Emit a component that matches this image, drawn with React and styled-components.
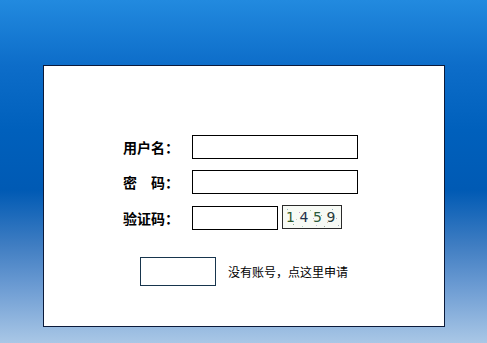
import React from "react";
import styled, { createGlobalStyle } from "styled-components";

const Global = createGlobalStyle`
  html, body { margin: 0; padding: 0; }
  body {
    width: 487px;
    height: 343px;
    overflow: hidden;
    font-family: "Noto Sans CJK SC", "Liberation Sans", sans-serif;
    background: linear-gradient(to bottom,
      #228ADF 0px,
      #0D6DC9 65px,
      #0060BC 130px,
      #005AB4 190px,
      #3F7DC2 245px,
      #6A9AD2 285px,
      #A9C7E6 343px);
  }
`;

const Page = styled.div`
  padding: 65px 0 0 43px;
`;

const Panel = styled.div`
  box-sizing: border-box;
  width: 402px;
  height: 262px;
  background: #ffffff;
  border: 1px solid #0b1a3a;
  padding: 69px 0 0 79px;
  display: flex;
  flex-direction: column;
`;

const Form = styled.div`
  display: flex;
  flex-direction: column;
  gap: 11px;
`;

const Row = styled.div`
  display: flex;
  align-items: center;
  height: 24px;
  margin-top: ${(p) => p.$shift || 0}px;
`;

const Label = styled.span`
  width: 69px;
  font-size: 14px;
  font-weight: 700;
  color: #000;
  line-height: 24px;
  white-space: pre;
`;

const Field = styled.div`
  box-sizing: border-box;
  width: ${(p) => p.$w}px;
  height: 24px;
  border: 1px solid #000;
  background: #fff;
`;

const Captcha = styled.div`
  position: relative;
  box-sizing: border-box;
  width: 60px;
  height: 24px;
  margin-left: 4px;
  margin-top: -2px;
  border: 1px solid #2a2a2a;
  background: #f7faf5;
  display: flex;
  align-items: center;
  padding-left: 3px;
`;

const Digit = styled.span`
  width: 13.5px;
  font-family: "DejaVu Sans", "Liberation Sans", sans-serif;
  font-size: 14px;
  line-height: 20px;
  color: ${(p) => p.$c};
  position: relative;
  z-index: 1;
`;

const Noise = styled.svg`
  position: absolute;
  left: 0;
  top: 0;
`;

const Footer = styled.div`
  display: flex;
  align-items: center;
  margin-top: 27px;
  padding-left: 17px;
`;

const Box = styled.div`
  box-sizing: border-box;
  width: 76px;
  height: 29px;
  border: 1px solid #17354d;
  background: #fff;
`;

const Link = styled.span`
  margin-left: 12px;
  font-size: 12px;
  color: #000;
`;

const dots = [
  [4, 3, "#9bb"], [10, 18, "#8a8"], [16, 6, "#c9c"], [22, 15, "#99c"],
  [27, 4, "#aca"], [33, 19, "#bbd"], [38, 9, "#9b9"], [44, 16, "#cba"],
  [49, 3, "#8ab"], [53, 12, "#aac"], [7, 11, "#bcb"], [30, 12, "#cac"],
  [41, 20, "#9a9"], [19, 20, "#acb"], [55, 19, "#9ab"], [13, 13, "#ccb"],
];

export default function App() {
  return (
    <>
      <Global />
      <Page>
        <Panel>
          <Form>
            <Row>
              <Label>用户名：</Label>
              <Field $w={166} />
            </Row>
            <Row>
              <Label>{"密\u3000码："}</Label>
              <Field $w={166} />
            </Row>
            <Row $shift={1}>
              <Label>验证码：</Label>
              <Field $w={86} />
              <Captcha>
                <Noise width="58" height="22" viewBox="0 0 58 22">
                  {dots.map(([x, y, c], i) => (
                    <rect key={i} x={x} y={y} width="1" height="1" fill={c} />
                  ))}
                </Noise>
                <Digit $c="#2f5a2c">1</Digit>
                <Digit $c="#1f2f4a">4</Digit>
                <Digit $c="#2c5a3a">5</Digit>
                <Digit $c="#2a3a3a">9</Digit>
              </Captcha>
            </Row>
          </Form>
          <Footer>
            <Box />
            <Link>没有账号，点这里申请</Link>
          </Footer>
        </Panel>
      </Page>
    </>
  );
}
